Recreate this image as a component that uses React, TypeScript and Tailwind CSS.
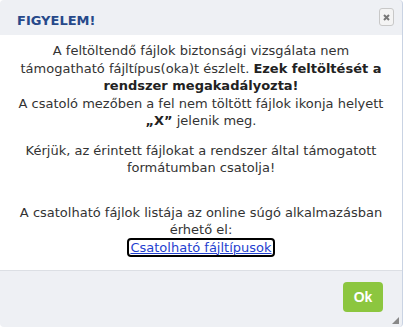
import React from 'react';

function App() {
    return (
        <div className="w-[403px] h-[327px] flex flex-col bg-[#eef0f4] rounded-[4px] overflow-hidden border-r border-[#c9d3e3] relative" style={{ fontFamily: '"DejaVu Sans", sans-serif' }}>
            <div className="h-[35px] flex items-start justify-between pl-[17px] pr-[8px] shrink-0">
                <h2 className="mt-[12px] text-[13px] leading-[18px] font-bold text-[#27498a]">FIGYELEM!</h2>
                <button className="mt-[8px] w-[15px] h-[18px] border border-[#c8c8c8] rounded-[3px] bg-[#f4f4f4] flex items-center justify-center">
                    <svg width="7" height="7" viewBox="0 0 7 7">
                        <path d="M1 1 L6 6 M6 1 L1 6" stroke="#777" strokeWidth="2" />
                    </svg>
                </button>
            </div>

            <div className="h-[236px] bg-white border-b border-[#dcdfe4] text-center text-[13px] leading-[17.5px] text-[#333] whitespace-nowrap pt-[7px]">
                <p>
                    A feltöltendő fájlok biztonsági vizsgálata nem
                    <br />
                    támogatható fájltípus(oka)t észlelt. <b className="text-[#222]">Ezek feltöltését a</b>
                    <br />
                    <b className="text-[#222]">rendszer megakadályozta!</b>
                    <br />
                    A csatoló mezőben a fel nem töltött fájlok ikonja helyett
                    <br />
                    <b className="text-[#222]">„X”</b> jelenik meg.
                </p>
                <p className="mt-[12px]">
                    Kérjük, az érintett fájlokat a rendszer által támogatott
                    <br />
                    formátumban csatolja!
                </p>
                <p className="mt-[27px]">
                    A csatolható fájlok listája az online súgó alkalmazásban
                    <br />
                    érhető el:
                    <br />
                    <a href="#" className="text-[#1f3fd0] underline outline-2 outline-black rounded-[2px] px-[1px]">Csatolható fájltípusok</a>
                </p>
            </div>

            <div className="flex-1 flex items-start justify-end pt-[11px] pr-[19px]">
                <button className="w-[40px] h-[30px] rounded-[4px] bg-[#8cc63f] text-white font-bold text-[14px]" style={{ fontFamily: '"Liberation Sans", Arial, sans-serif' }}>Ok</button>
            </div>

            <svg className="absolute right-[3px] bottom-[3px]" width="7" height="7" viewBox="0 0 7 7">
                <path d="M7 0 L7 7 L0 7 Z" fill="#888" />
            </svg>
        </div>
    );
}

export default App;
